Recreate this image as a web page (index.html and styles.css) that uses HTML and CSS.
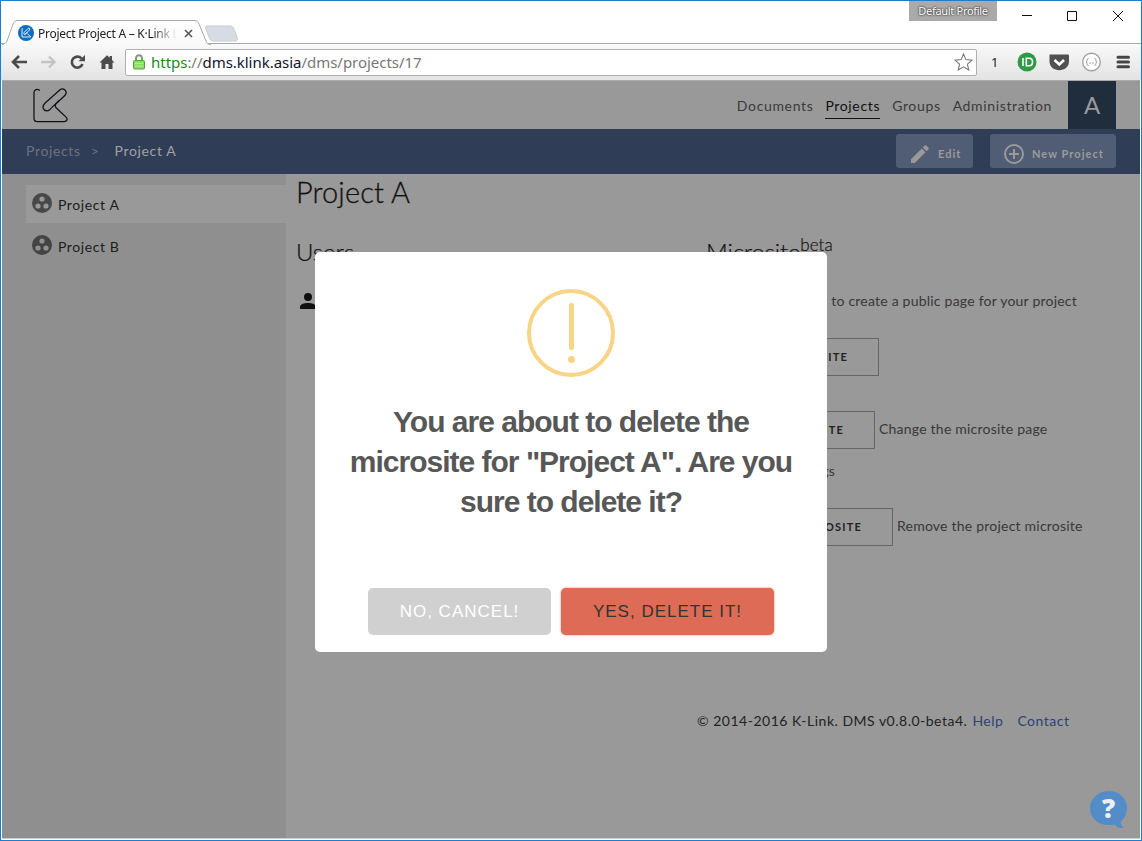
FILE: index.html
```html
<!DOCTYPE html>
<html lang="en">
<head>
<meta charset="utf-8">
<title>Project Project A – K·Link DMS</title>
<link rel="stylesheet" href="styles.css">
</head>
<body>
<div class="window">
  <header class="titlebar">
    <svg class="tabs" width="245" height="25" viewBox="0 0 245 25">
      <defs><linearGradient id="tabfill" x1="0" y1="0" x2="0" y2="1"><stop offset="0" stop-color="#fff"/><stop offset="1" stop-color="#f9f9f9"/></linearGradient></defs>
      <path d="M0 24.500C3 24 4 23 5 21L11 4C12 1.500 13 .5 16 .5H192C195 .5 196 1.500 197 4L204 21C205 23.500 206 24.500 209 24.500" fill="url(#tabfill)" stroke="#a9a9a9"/>
      <path d="M205 6H228C230 6 231 7 232 9L235 17C236 20 235 21 233 21H212C209 21 208 20 207 17L204 9C203 7 203 6 205 6Z" fill="#d7dce4" stroke="#c9ccd2"/>
    </svg>
    <div class="tab">
      <svg class="favicon" width="16" height="16" viewBox="0 0 16 16"><circle cx="8" cy="8" r="8" fill="#0d6cbb"/><path d="M4.500 3.500H4V12H12.500V11.500L9.500 8.800M7 9.500L11.500 5C12.500 3.500 11 2.500 10 3.500L6.500 7C5 8.700 6.300 10.300 7.800 8.800L9.500 7" fill="none" stroke="#fff" stroke-width=".9"/></svg>
      <span class="tab-title">Project Project A – K·Link D</span>
      <svg class="tab-close" width="9" height="9" viewBox="0 0 9 9"><path d="M1 1L8 8M8 1L1 8" stroke="#555" stroke-width="1.600"/></svg>
    </div>
    <span class="profile">Default Profile</span>
    <svg class="controls" width="104" height="12" viewBox="0 0 104 12"><path d="M0 5.500H10M45.500 1.500H54.500V10.500H45.500V1.500M91 1L101 11M101 1L91 11" fill="none" stroke="#111"/></svg>
  </header>
  <div class="toolbar">
    <svg class="nav-icons" width="106" height="18" viewBox="0 0 106 18">
      <path d="M9 3L3 9L9 15M3 9H17" fill="none" stroke="#4b4b4b" stroke-width="2.600"/>
      <path d="M39 3.500L44.500 9L39 14.500M44 9H31" fill="none" stroke="#c4c4c4" stroke-width="2.400"/>
      <path d="M71.500 5.500A5.500 5.500 0 1 0 72.500 11" fill="none" stroke="#4b4b4b" stroke-width="2.600"/><path d="M75 2V8.200H68.500Z" fill="#4b4b4b"/>
      <path d="M89.500 9.500L97 2.200L99.700 4.800V3H102V7L104.500 9.500H102.500V16H98.500V11H95.500V16H91.500V9.500Z" fill="#4b4b4b"/>
    </svg>
    <div class="omnibox">
      <svg width="12" height="16" viewBox="0 0 12 16"><path d="M3 8V4.500C3 .2 9 .2 9 4.500V8" fill="none" stroke="#909090" stroke-width="2"/><rect x=".5" y="6.500" width="11" height="8.500" rx="1" fill="#8ddb66" stroke="#55a33c"/><path d="M2 9.500H10M2 12H10" stroke="#b5ec98"/></svg>
      <span class="url"><span class="secure">https</span><span class="muted">://</span>dms.klink.asia<span class="muted">/dms/projects/17</span></span>
      <svg class="star" width="19" height="18" viewBox="0 0 19 18"><path d="M9.500 1L11.900 6.600L18 7.200L13.400 11.200L14.800 17L9.500 13.900L4.200 17L5.600 11.200L1 7.200L7.100 6.600Z" fill="#fff" stroke="#777" stroke-width="1.100"/></svg>
    </div>
    <span class="count">1</span>
    <svg class="ext" width="114" height="20" viewBox="0 0 114 20">
      <circle cx="10" cy="10" r="9.500" fill="#2f9a45"/><path d="M6 6V14M9.300 6.200H12C16.700 6.200 16.700 13.800 12 13.800H9.300Z" fill="none" stroke="#fff" stroke-width="1.600"/>
      <path d="M33 2.500H51Q52 2.500 52 3.500V9.500C52 21 32.500 21 32.500 9.500V3.500Q32.500 2.500 33 2.500Z" fill="#515151"/><path d="M37.500 8L42.300 12.500L47 8" fill="none" stroke="#fff" stroke-width="2.600"/>
      <circle cx="74.500" cy="10" r="8.800" fill="#fff" stroke="#a2a2a2" stroke-width="1.400"/><path d="M71.500 6.500Q70 6.500 70 8.500Q70 10 69 10Q70 10 70 11.500Q70 13.500 71.500 13.500M77.500 6.500Q79 6.500 79 8.500Q79 10 80 10Q79 10 79 11.500Q79 13.500 77.500 13.500M72.500 11H74M75.200 11H76.700" fill="none" stroke="#999"/>
      <path d="M101 5.200H111.500M101 10H111.500M101 14.800H111.500" stroke="#454545" stroke-width="3" stroke-linecap="round"/>
    </svg>
  </div>
  <div class="page">
    <div class="masthead">
      <svg class="logo" width="35" height="35" viewBox="0 0 36 36"><path d="M7 2.500C4 .5 1 1.500 1 5V31Q1 34.500 4.500 34.500H32C35 34.500 36 32 34 30L24 20.500C22.500 19 22.500 17.500 24 16L33 7.500C36 3.500 31.500 -1 27.500 2L12.500 15.500C7.500 20.500 12.500 26 17.500 22L27 12.500" fill="none" stroke="#111116" stroke-width="1.300"/></svg>
      <nav class="menu"><a>Documents</a><a class="current">Projects</a><a>Groups</a><a>Administration</a></nav>
      <div class="avatar">A</div>
    </div>
    <div class="subbar">
      <span class="crumb">Projects</span><span class="crumb arrow">&gt;</span><span class="crumb here">Project A</span>
      <div class="actions">
        <span class="action edit"><svg width="20" height="20" viewBox="0 0 20 20"><path d="M1 15.200V19H4.800L15.500 8.300L11.700 4.500ZM18.500 5.300Q19.200 4.500 18.500 3.800L16.200 1.500Q15.500.8 14.700 1.500L12.700 3.500L16.500 7.300Z" fill="#999"/></svg>Edit</span>
        <span class="action new"><svg width="20" height="20" viewBox="0 0 20 20"><path d="M10 5V15M5 10H15" stroke="#999" stroke-width="2"/><circle cx="10" cy="10" r="9" fill="none" stroke="#999" stroke-width="2"/></svg>New Project</span>
      </div>
    </div>
    <div class="body">
      <aside class="sidebar">
        <div class="item active"><svg width="20" height="20" viewBox="0 0 20 20"><circle cx="10" cy="10" r="10" fill="#484848"/><circle cx="10" cy="6" r="2.600" fill="#989898"/><circle cx="6" cy="13" r="2.600" fill="#989898"/><circle cx="14" cy="13" r="2.600" fill="#989898"/></svg><span>Project A</span></div>
        <div class="item"><svg width="20" height="20" viewBox="0 0 20 20"><circle cx="10" cy="10" r="10" fill="#444"/><circle cx="10" cy="6" r="2.600" fill="#909090"/><circle cx="6" cy="13" r="2.600" fill="#909090"/><circle cx="14" cy="13" r="2.600" fill="#909090"/></svg><span>Project B</span></div>
      </aside>
      <main class="main">
        <h1>Project A</h1>
        <div class="columns">
          <section class="users"><h2>Users</h2><svg width="16" height="16" viewBox="0 0 16 16"><circle cx="8" cy="4" r="4" fill="#111"/><path d="M0 16V14C0 11.300 4 10 8 10S16 11.300 16 14V16Z" fill="#111"/></svg></section>
          <section class="microsite">
            <h2>Microsite<span class="beta">beta</span></h2>
            <p class="intro">A microsite allows to create a public page for your project</p>
            <span class="btn create">Create Microsite</span>
            <div class="row"><span class="btn change">Edit Microsite</span><span>Change the microsite page</span></div>
            <p class="more">and settings</p>
            <div class="row last"><span class="btn remove">Delete Microsite</span><span>Remove the project microsite</span></div>
            <footer><span>© 2014-2016 K-Link. DMS v0.8.0-beta4.</span><a class="help-link">Help</a><a>Contact</a></footer>
          </section>
        </div>
      </main>
    </div>
  </div>
  <div class="modal">
    <svg width="88" height="88" viewBox="0 0 88 88"><circle cx="44" cy="44" r="42" fill="none" stroke="#f8d486" stroke-width="4"/><rect x="42" y="14" width="5" height="47" rx="2" fill="#f8d486"/><circle cx="44.500" cy="70.500" r="3.600" fill="#f8d486"/></svg>
    <h3>You are about to delete the<br>microsite for "Project A". Are you<br>sure to delete it?</h3>
    <div class="buttons"><span class="cancel">NO, CANCEL!</span><span class="confirm">YES, DELETE IT!</span></div>
  </div>
  <div class="bubble"><svg width="38" height="38" viewBox="0 0 38 38"><path d="M19 0C29 0 37 7.500 37 17C37 23 34 28 30.500 31Q31 35 34 36.500Q28 38 24.500 33.500C10 36.500 0 28 0 17C0 7.500 8.500 0 19 0Z" fill="#528dc9"/></svg><b>?</b></div>
</div>
</body>
</html>
```
FILE: styles.css
```css
* { box-sizing: border-box; }
body { margin: 0; font-family: Lato, sans-serif; }
svg { display: block; flex: none; }
h1, h2, h3, p { margin: 0; font-weight: 400; }
.window { position: relative; width: 1142px; height: 841px; overflow: hidden; background: #fff; border: 1px solid #1a7fd4; white-space: nowrap; }

.titlebar { position: relative; display: flex; height: 43px; border-bottom: 1px solid #a9a9a9; }
.tabs { position: absolute; left: 1px; top: 19px; }
.tab { position: relative; display: flex; align-items: center; height: 24px; margin: 20px 0 0 17px; width: 176px; font: 12px "Noto Sans", sans-serif; color: #222; }
.tab-title { margin-left: 4px; width: 139px; overflow: hidden; letter-spacing: -.26px; -webkit-mask-image: linear-gradient(to right, #000 82%, transparent); mask-image: linear-gradient(to right, #000 82%, transparent); }
.tab-close { margin-left: 7px; }
.profile { margin-left: 715px; width: 88px; height: 20px; background: #aaa; color: #fff; font: 11px/20px "Noto Sans", sans-serif; letter-spacing: -.3px; text-align: center; text-shadow: 0 0 2px #333, 0 0 2px #333; }
.controls { margin: 9px 0 0 25px; }

.toolbar { display: flex; align-items: center; height: 36px; background: linear-gradient(#f9f9f9, #e3e3e3); }
.nav-icons { margin-left: 9px; }
.omnibox { display: flex; align-items: center; width: 852px; height: 27px; margin-left: 9px; padding: 0 3px 0 7px; background: #fff; border: 1px solid #b0b0b0; border-radius: 2px; }
.url { margin-left: 6px; font: 15px/24px "Noto Sans", sans-serif; letter-spacing: -.03px; color: #12122b; }
.secure { color: #178c17; }
.muted { color: #777; }
.star { margin-left: auto; }
.count { margin-left: 14px; width: 8px; font: 13px "Noto Sans", sans-serif; color: #222; }
.ext { margin-left: 18px; }

.page { margin: 0 1px; height: 759px; background: #999; border-top: 1px solid #aaa; border-bottom: 1px solid #ccc; }
.masthead { display: flex; height: 48px; padding-right: 24px; }
.logo { margin: 7px 0 0 31px; }
.menu { display: flex; gap: 12px; margin-left: auto; padding-top: 15px; font-size: 14px; line-height: 20px; letter-spacing: .65px; color: #3a3a3a; }
.menu a { height: 23px; }
.menu .current { color: #111; border-bottom: 1px solid #111; }
.avatar { width: 48px; height: 48px; margin-left: 16px; background: #1f2d3c; color: #999; font-size: 24px; line-height: 48px; text-align: center; }

.subbar { display: flex; height: 45px; padding: 0 24px; background: #2f3d57; line-height: 43px; font-size: 14px; letter-spacing: .65px; color: #9b9b9b; }
.crumb { color: #6c7280; }
.arrow { margin: 0 15px 0 10px; }
.crumb.here { color: #a2a2a2; }
.actions { display: flex; gap: 17px; margin-left: auto; padding-top: 5px; }
.action { display: flex; align-items: center; height: 34px; padding: 5px 0 0 14px; gap: 8px; border-radius: 3px; background: #505d74; font-size: 11px; font-weight: 700; letter-spacing: 1.05px; line-height: 30px; }
.edit { width: 77px; }
.new { width: 126px; }

.body { display: flex; height: 664px; }
.sidebar { width: 284px; padding: 11px 0 0 24px; background: #8f8f8f; }
.item { display: flex; height: 38px; margin-bottom: 4px; padding: 8px 0 0 6px; gap: 6px; font-size: 14px; line-height: 24px; letter-spacing: .6px; color: #1c1c1c; }
.active { background: #999; }
.main { flex: 1; padding: 0 0 0 10px; color: #111; }
.main h1 { font-size: 29px; line-height: 35px; font-weight: 300; letter-spacing: .1px; -webkit-text-stroke: .3px #111; }
.columns { display: flex; margin: 27px 0 0 0; }
.columns h2 { height: 38px; font-size: 24px; line-height: 32px; font-weight: 300; -webkit-text-stroke: .2px #111; }
.users { width: 411px; }
.users svg { margin: 19px 0 0 4px; }
.microsite { width: 390px; font-size: 14px; letter-spacing: .22px; color: #383838; }
.microsite h2 { margin-left: -1px; letter-spacing: -.15px; color: #111; }
.beta { display: inline-block; font-size: 17px; line-height: 16px; letter-spacing: 0; vertical-align: 10px; }
.intro { display: flex; justify-content: flex-end; width: 370px; margin-top: 17px; line-height: 20px; }
.btn { display: block; height: 38px; padding-right: 30px; border: 1px solid #666; text-align: right; font-size: 11px; font-weight: 700; line-height: 36px; letter-spacing: 1.2px; text-transform: uppercase; color: #222; }
.create { width: 172px; margin-top: 27px; }
.row { display: flex; gap: 4px; margin-top: 35px; line-height: 36px; }
.change { width: 168px; }
.remove { width: 186px; }
.more { width: 128px; margin-top: 12px; line-height: 20px; text-align: right; }
.row.last { margin-top: 27px; }
.microsite footer { display: flex; margin: 164px 0 0 -10px; line-height: 22px; letter-spacing: .5px; color: #222; }
.microsite footer a { color: #2d4372; }
.microsite footer .help-link { margin: 0 14px 0 5px; }

.modal { position: absolute; left: 314px; top: 251px; width: 512px; height: 400px; display: flex; flex-direction: column; align-items: center; padding-top: 37px; border-radius: 5px; background: #fff; font-family: "Liberation Sans", Arial, sans-serif; }
.modal h3 { margin-top: 25px; font-size: 30px; line-height: 40px; font-weight: 700; letter-spacing: -1px; text-align: center; color: #575757; }
.buttons { display: flex; gap: 10px; align-items: center; margin-top: 66px; font-size: 17px; letter-spacing: 1px; text-align: center; }
.cancel { width: 183px; height: 47px; line-height: 47px; border-radius: 5px; background: #d0d0d0; color: #fff; }
.confirm { width: 213px; height: 47px; line-height: 47px; border-radius: 5px; background: #dd6b55; color: #333; box-shadow: 0 0 2px #dd6b55; }
.bubble { position: absolute; left: 1089px; top: 790px; width: 38px; height: 38px; }
.bubble b { position: absolute; inset: 0 1px auto 0; text-align: center; font: 800 26px/35px "Open Sans", sans-serif; color: #eee; }
```
